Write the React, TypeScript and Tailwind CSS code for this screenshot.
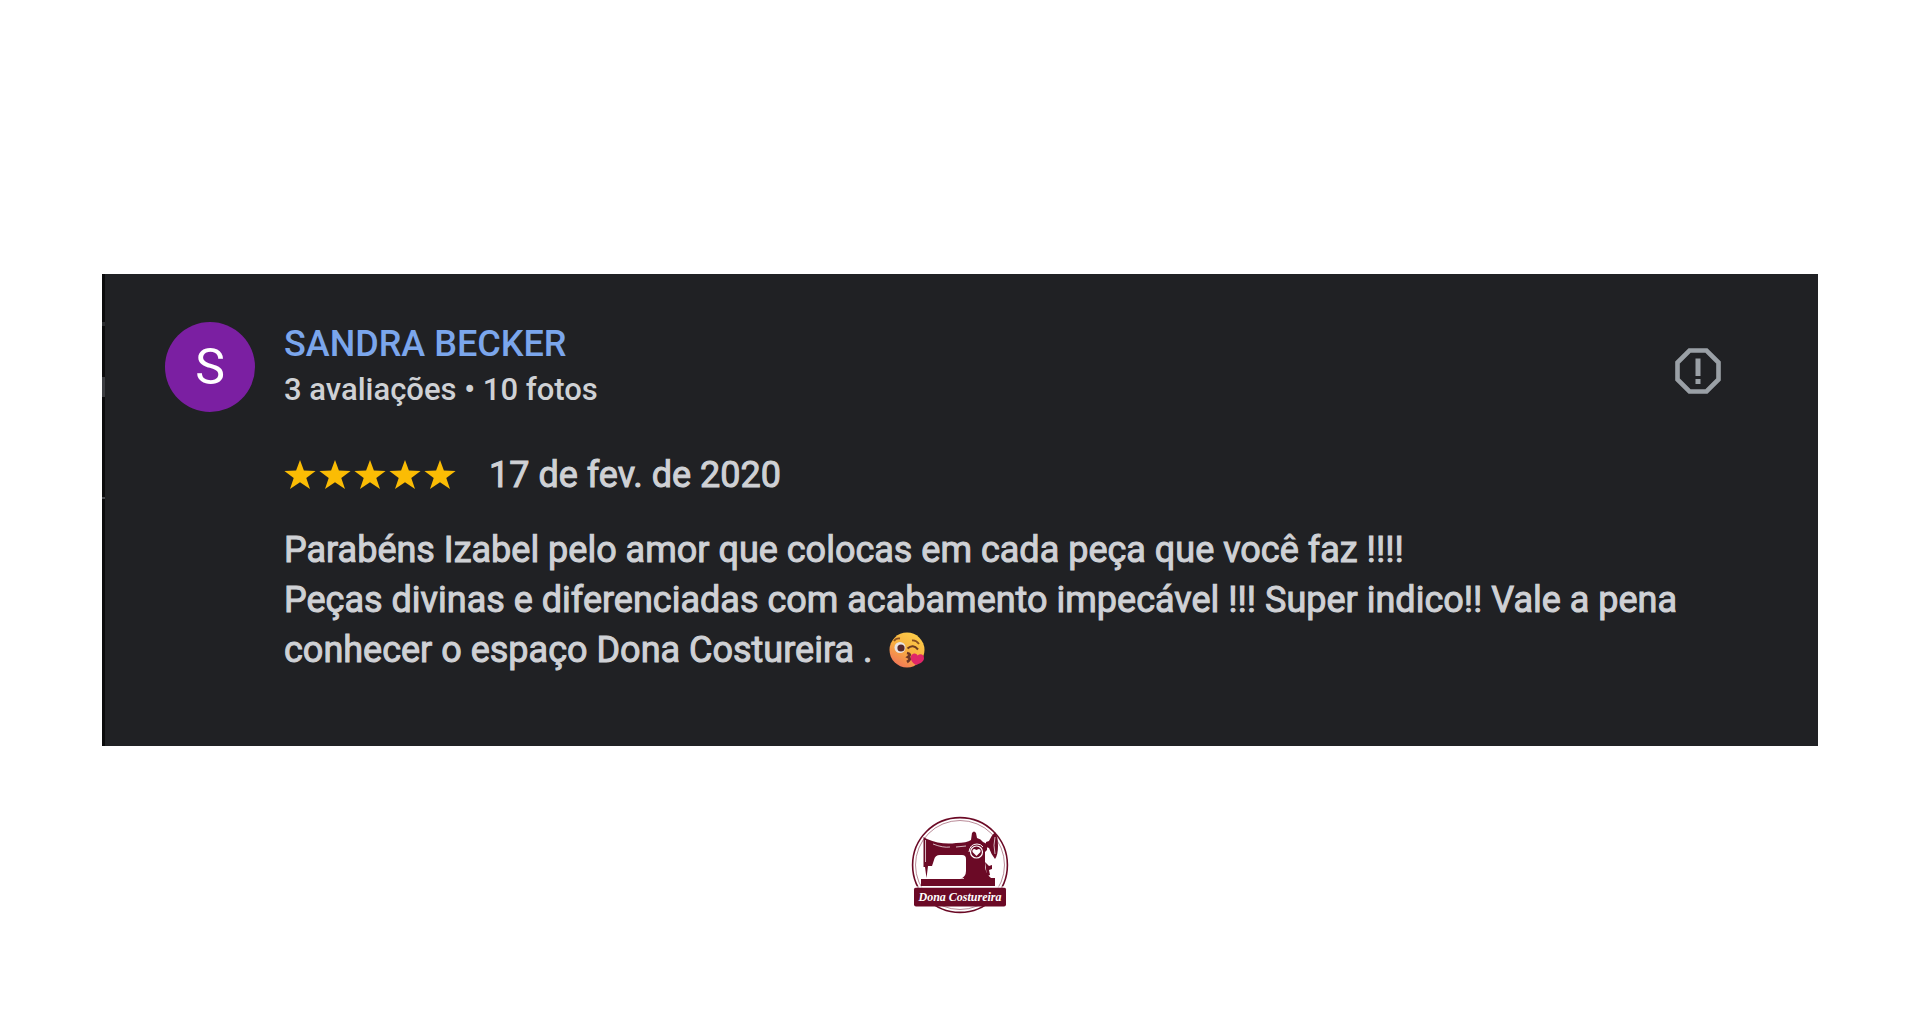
const STARS = [1, 2, 3, 4, 5];

function Star() {
  return (
    <svg viewBox="0 0 32 30" className="h-[30px] w-8" fill="#fbbc04" aria-hidden="true">
      <path d="M16 0 L19.9 10.6 L31.6 11 L22.3 17.9 L26 29 L16 22.3 L6 29 L9.7 17.9 L0.4 11 L12.1 10.6 Z" />
    </svg>
  );
}

function KissEmoji() {
  return (
    <svg viewBox="0 0 36 36" className="ml-2 inline-block h-9 w-9 align-[-6px]" role="img" aria-label="😘">
      <defs>
        <linearGradient id="face" x1="0.8" y1="0" x2="0.2" y2="1">
          <stop offset="0" stopColor="#fcd04a" />
          <stop offset="0.5" stopColor="#f8b040" />
          <stop offset="1" stopColor="#f0705a" />
        </linearGradient>
      </defs>
      <circle cx="18" cy="18" r="17.5" fill="url(#face)" />
      <path d="M5 9 Q7 6 11 6.500" stroke="#8a5020" strokeWidth="1.800" fill="none" />
      <path d="M23 8.500 Q27 8 30 12" stroke="#8a5020" strokeWidth="1.800" fill="none" />
      <circle cx="11" cy="15.500" r="5.500" fill="#e9e4e2" />
      <circle cx="12" cy="16" r="3.600" fill="#54282c" />
      <path d="M18.500 16.500 Q24 11.500 29 17.500" stroke="#6b3a20" strokeWidth="2" fill="none" />
      <path d="M18 21 Q23 22 19 25 Q23 27 18 30" stroke="#6b3426" strokeWidth="2.800" fill="none" />
      <path d="M27 33 C20 29 21 23 24 22 C26 21 28 22 28.500 23.500 C31 21 35 22 35 26 C35 30 31 31.500 27 33 Z" fill="#df2668" />
    </svg>
  );
}

function ReportIcon() {
  return (
    <svg viewBox="0 0 46 46" className="h-[46px] w-[46px]" aria-hidden="true">
      <path d="M14.500 2.500 H31.500 L43.500 14.500 V31.500 L31.500 43.500 H14.500 L2.500 31.500 V14.500 Z" fill="none" stroke="#9aa0a6" strokeWidth="4.600" />
      <path d="M20.500 10.500 H25.500 V28 H20.500 Z M20.500 31 H25.500 V36 H20.500 Z" fill="#9aa0a6" />
    </svg>
  );
}

function Logo() {
  return (
    <svg viewBox="0 0 98 98" className="h-[98px] w-[98px]" role="img" aria-label="Dona Costureira">
      <circle cx="49" cy="49" r="47.400" fill="none" stroke="#6b0a26" strokeWidth="1.600" />
      <circle cx="49" cy="49" r="44.500" fill="none" stroke="#6b0a26" strokeWidth="0.600" strokeOpacity="0.8" />
      <g fill="#6b0a26">
        <path d="M12.500 21 L16 23 Q30 29 45 27 Q56 27 60 24 L61 17 Q63 14 65 17 L66 22 Q70 23 72 26 L76 28 V34 L74 36 V51 Q75 58 80 62 H84 V70 H10 V63 H49 Q55 61 55 55 V43 Q55 39 51 39 H29 Q24 39 23 44 L21 50 H17 L15.500 62 L14 51 H12.500 Z" />
        <path d="M75 26 L78 25 Q80 20 84 16 Q87 20 87 30 Q87 39 84 43 Q80 38 78 32 L75 31 Z" />
        <path d="M74 46 L78 50 L81 49 L81 53 L78 54 L79 59 L76 60 Z" />
        <rect x="3" y="71.500" width="92" height="19" rx="2" />
      </g>
      <path d="M14.500 24 V46 M22 28 Q32 32 39 31 M45 31 L55 30 M11 62.500 H53 M84 21 Q82 29 84 38" stroke="#fff" strokeWidth="0.700" fill="none" />
      <path d="M3 71 H95" stroke="#fff" strokeWidth="1.200" />
      <path d="M58 36 Q59 28 66 28 Q70 28 72 31" stroke="#fff" strokeWidth="1" fill="none" />
      <circle cx="65.500" cy="36" r="6" fill="none" stroke="#fff" strokeWidth="1.200" />
      <path d="M65.500 40 L61.500 36 Q61 33 63.500 33 L65.500 34 L67.500 33 Q70 33 69.500 36 Z" fill="#fff" />
      <text x="49" y="85" textAnchor="middle" fill="#fff" className="font-['Liberation_Serif',serif] text-[12px] font-bold italic">Dona Costureira</text>
    </svg>
  );
}

export default function App() {
  return (
    <main className="flex min-h-screen flex-col items-center bg-white px-[102px] pt-[274px] font-['Roboto',sans-serif] text-[#cfd1d5]">
      <article className="relative w-full border-l-3 border-[#0b0b0c] bg-[#202124] pt-[47px] pr-[97px] pb-[71px] pl-[60px]">
        <span className="absolute top-[48px] -left-[3px] h-1 w-[3px] bg-[#2c2d30]" />
        <span className="absolute top-[103px] -left-[3px] h-5 w-[3px] bg-[#3c3d41]" />
        <span className="absolute top-[223px] -left-[3px] h-0.5 w-[3px] bg-[#4a4b4f]" />
        <header className="flex items-center">
          <div className="flex h-[90px] w-[90px] items-center justify-center rounded-full bg-[#7b1fa2] text-[50px] leading-none text-white">S</div>
          <div className="ml-[29px] flex-1">
            <a href="#autor" className="block text-[36px] leading-[46px] font-medium text-[#7ba6ec]">SANDRA BECKER</a>
            <p className="text-[31px] leading-[46px] font-medium">3 avaliações • 10 fotos</p>
          </div>
          <button type="button" aria-label="Denunciar avaliação" className="mt-2">
            <ReportIcon />
          </button>
        </header>
        <div className="ml-[119px]">
          <div className="mt-[37px] flex items-center">
            <div className="flex gap-[3px]" role="img" aria-label="5 de 5 estrelas">
              {STARS.map((n) => (
                <Star key={n} />
              ))}
            </div>
            <time dateTime="2020-02-17" className="ml-[33px] text-[36px] leading-[50px] [-webkit-text-stroke:1px]">17 de fev. de 2020</time>
          </div>
          <p className="mt-[25px] text-[36px] leading-[50px] [-webkit-text-stroke:1px]">
            Parabéns Izabel pelo amor que colocas em cada peça que você faz !!!!
            <br />
            Peças divinas e diferenciadas com acabamento impecável !!! Super indico!! Vale a pena conhecer o espaço Dona Costureira . <KissEmoji />
          </p>
        </div>
      </article>
      <footer className="mt-[70px]">
        <Logo />
      </footer>
    </main>
  );
}
